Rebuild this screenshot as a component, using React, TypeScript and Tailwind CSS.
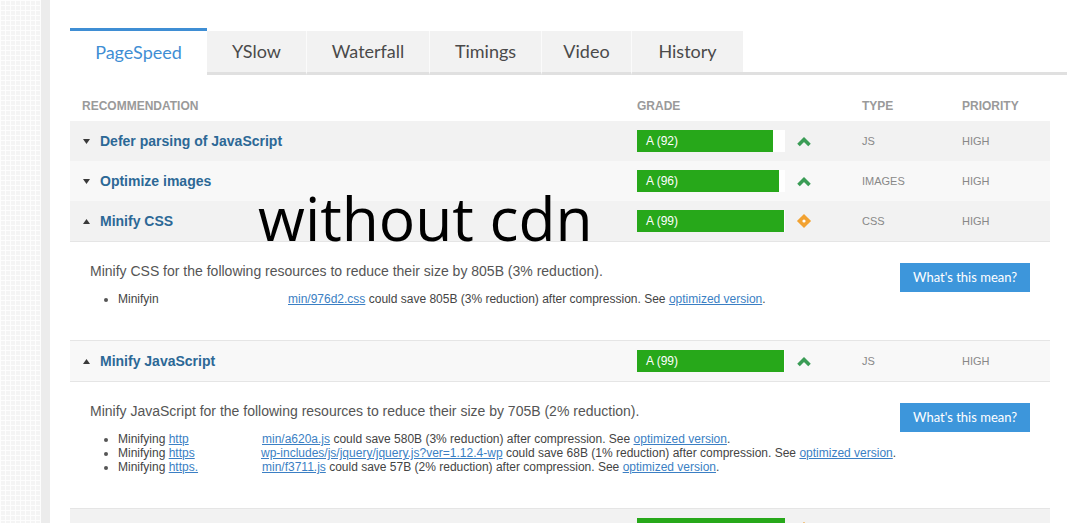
import React from "react";

type Icon = "up" | "diamond";

type Rule = {
    title: string;
    grade: number;
    icon: Icon;
    type: string;
    priority: string;
    open: boolean;
    summary?: string;
    items?: { lead: string; leadLink?: string; cut: number; file: string; rest: string }[];
};

const rules: Rule[] = [
    { title: "Defer parsing of JavaScript", grade: 92, icon: "up", type: "JS", priority: "HIGH", open: false },
    { title: "Optimize images", grade: 96, icon: "up", type: "IMAGES", priority: "HIGH", open: false },
    {
        title: "Minify CSS",
        grade: 99,
        icon: "diamond",
        type: "CSS",
        priority: "HIGH",
        open: true,
        summary: "Minify CSS for the following resources to reduce their size by 805B (3% reduction).",
        items: [
            { lead: "Minifyin", cut: 170, file: "min/976d2.css", rest: " could save 805B (3% reduction) after compression. See " },
        ],
    },
    {
        title: "Minify JavaScript",
        grade: 99,
        icon: "up",
        type: "JS",
        priority: "HIGH",
        open: true,
        summary: "Minify JavaScript for the following resources to reduce their size by 705B (2% reduction).",
        items: [
            { lead: "Minifying ", leadLink: "http", cut: 144, file: "min/a620a.js", rest: " could save 580B (3% reduction) after compression. See " },
            { lead: "Minifying ", leadLink: "https", cut: 143, file: "wp-includes/js/jquery/jquery.js?ver=1.12.4-wp", rest: " could save 68B (1% reduction) after compression. See " },
            { lead: "Minifying ", leadLink: "https.", cut: 144, file: "min/f3711.js", rest: " could save 57B (2% reduction) after compression. See " },
        ],
    },
    { title: "Minify HTML", grade: 100, icon: "diamond", type: "HTML", priority: "HIGH", open: false },
];

const tabs = [
    { label: "YSlow", w: "w-[99px]" },
    { label: "Waterfall", w: "w-[123px]" },
    { label: "Timings", w: "w-[112px]" },
    { label: "Video", w: "w-[90px]" },
    { label: "History", w: "w-[112px]" },
];

function Caret({ open }: { open: boolean }) {
    return (
        <svg width="7" height="5" viewBox="0 0 7 5" className="shrink-0">
            {open ? <polygon points="0,5 7,5 3.5,0" fill="#3a3a3a" /> : <polygon points="0,0 7,0 3.5,5" fill="#3a3a3a" />}
        </svg>
    );
}

function TrendIcon({ kind }: { kind: Icon }) {
    if (kind === "diamond") {
        return (
            <svg width="16" height="16" viewBox="0 0 16 16">
                <rect x="3" y="3" width="10" height="10" transform="rotate(45 8 8)" fill="#f2a231" />
                <circle cx="8" cy="8" r="1.6" fill="#fff" />
            </svg>
        );
    }
    return (
        <svg width="16" height="12" viewBox="0 0 16 12">
            <polyline points="2.5,10 8,4.5 13.5,10" fill="none" stroke="#3a9c55" strokeWidth="3.6" strokeLinejoin="miter" />
        </svg>
    );
}

function GradeBar({ value }: { value: number }) {
    return (
        <div className="w-[148px] h-[22px] bg-white flex">
            <div className="h-full bg-[#27a81a] flex items-center pl-[9px] text-white text-[12px]" style={{ width: `${Math.min(value, 100)}%` }}>
                A ({value})
            </div>
        </div>
    );
}

function Panel({ rule }: { rule: Rule }) {
    return (
        <div className="bg-white border-y border-[#e5e5e5] pl-[20px] pr-[20px] pt-[19px] pb-[34px] flex justify-between">
            <div>
                <p className="text-[14px] leading-[20px] text-[#555]">{rule.summary}</p>
                <ul className="mt-[11px] pl-[28px] list-disc text-[12px] leading-[14px] text-[#444] marker:text-[#555]">
                    {rule.items!.map((it) => (
                        <li key={it.file}>
                            <span className="inline-block align-top whitespace-nowrap overflow-hidden" style={{ width: it.cut }}>
                                {it.lead}
                                {it.leadLink ? <a className="text-[#3b7fc4] underline">{it.leadLink}</a> : null}
                            </span>
                            <a className="text-[#3b7fc4] underline">{it.file}</a>
                            {it.rest}
                            <a className="text-[#3b7fc4] underline">optimized version</a>.
                        </li>
                    ))}
                </ul>
            </div>
            <button className="mt-[2px] w-[130px] h-[29px] shrink-0 bg-[#3d96db] text-white text-[13px] font-['Lato',sans-serif]">
                What's this mean?
            </button>
        </div>
    );
}

export default function App() {
    return (
        <div className="relative flex w-[1067px] h-[523px] overflow-hidden bg-white font-['Liberation_Sans',Arial,sans-serif]">
            {/* tiled page backdrop and its edge */}
            <div className="w-[41px] shrink-0 bg-[#f4f4f4] [background-image:linear-gradient(#fdfdfd_1px,transparent_1px),linear-gradient(90deg,#fdfdfd_1px,transparent_1px)] [background-size:5px_5px]" />
            <div className="w-[9px] shrink-0 bg-[#ececec]" />

            <div className="flex-1 pl-[20px] pt-[28px]">
                {/* Tabs */}
                <div className="flex items-end font-['Lato',sans-serif] text-[18px]">
                    <div className="w-[137px] h-[47px] border-t-[3px] border-[#3f8ed4] bg-white flex items-center justify-center pb-[1px] text-[#3f8ed4]">
                        PageSpeed
                    </div>
                    {tabs.map((t, i) => (
                        <div
                            key={t.label}
                            className={`${t.w} h-[44px] border-b-[3px] border-b-[#e0e0e0] bg-[#f2f2f2] flex items-center justify-center pb-[1px] text-[#4a4a4a] ${i > 0 ? "border-l border-l-[#fbfbfb]" : ""}`}
                        >
                            {t.label}
                        </div>
                    ))}
                    <div className="flex-1 h-[3px] bg-[#e0e0e0]" />
                </div>

                {/* Recommendations table */}
                <div className="w-[980px]">
                    <div className="grid grid-cols-[567px_225px_100px_1fr] h-[46px] items-end pb-[6px] text-[12px] font-bold text-[#9a9a9a]">
                        <span className="pl-[12px]">RECOMMENDATION</span>
                        <span>GRADE</span>
                        <span>TYPE</span>
                        <span>PRIORITY</span>
                    </div>

                    {rules.map((r, i) => (
                        <div key={r.title}>
                            <div className={`grid grid-cols-[567px_225px_100px_1fr] h-[40px] items-center ${i % 2 === 0 ? "bg-[#f2f2f2]" : "bg-[#f8f8f8]"}`}>
                                <div className="pl-[13px] flex items-center gap-[10px]">
                                    <Caret open={r.open} />
                                    <span className="text-[14px] font-bold text-[#2c6896]">{r.title}</span>
                                </div>
                                <div className="flex items-center">
                                    <GradeBar value={r.grade} />
                                    <span className="ml-[11px] flex items-center">
                                        <TrendIcon kind={r.icon} />
                                    </span>
                                </div>
                                <span className="text-[11px] text-[#888]">{r.type}</span>
                                <span className="text-[11px] text-[#888]">{r.priority}</span>
                            </div>
                            {r.open ? <Panel rule={r} /> : null}
                        </div>
                    ))}
                </div>
            </div>

            {/* caption laid over the table */}
            <div className="absolute left-[258px] top-[188px] text-[60.5px] leading-none text-black font-['Open_Sans',sans-serif]">
                without cdn
            </div>
        </div>
    );
}
